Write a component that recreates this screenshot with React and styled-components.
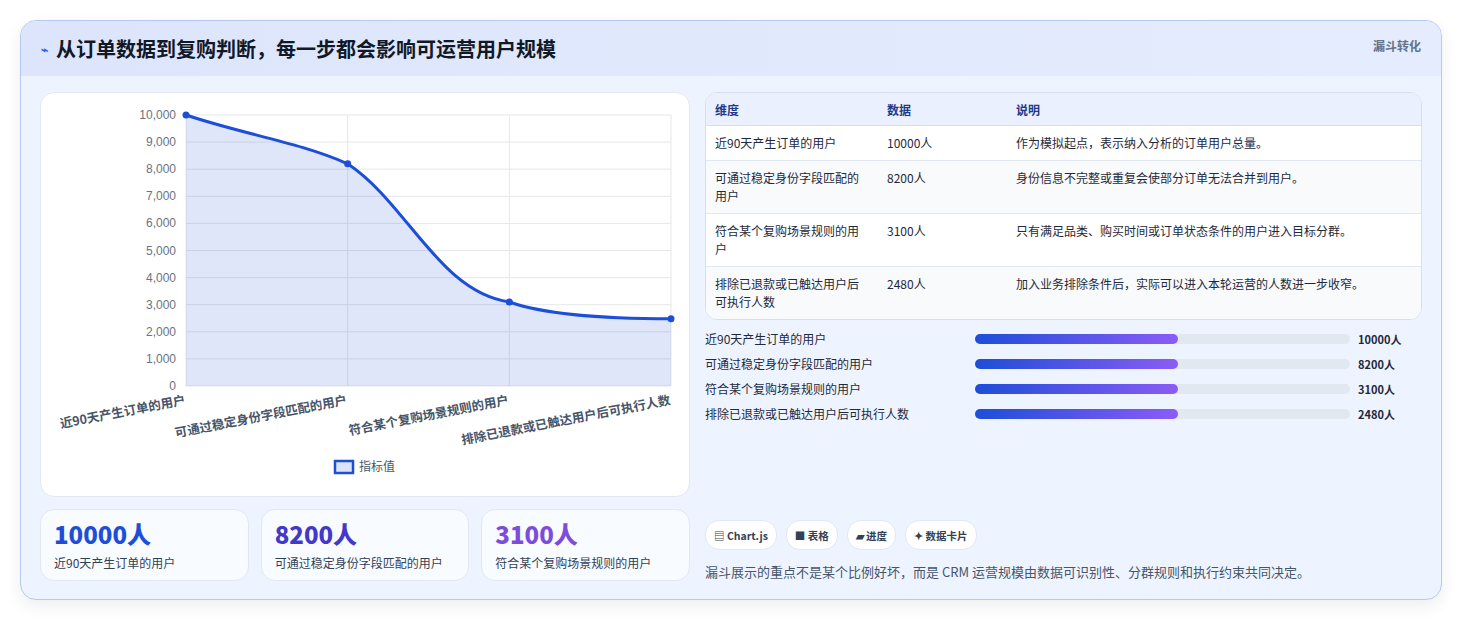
import styled, { createGlobalStyle } from "styled-components";

const GlobalStyle = createGlobalStyle`
  body { margin: 0; background: #fff; font-family: "Noto Sans CJK SC", "Noto Sans", sans-serif; color: #1e293b; }
`;

const Page = styled.div`
  padding: 20px 20px 21px 20px;
`;

const Card = styled.section`
  border: 1px solid #b9c8ee;
  border-radius: 16px;
  background: #eef4ff;
  overflow: hidden;
  box-shadow: 0 6px 16px rgba(30, 41, 59, 0.08);
`;

const Header = styled.header`
  height: 55px;
  display: flex;
  align-items: center;
  justify-content: space-between;
  padding: 0 20px;
  background: linear-gradient(90deg, #dde5fc, #e4ecfd);
`;

const Title = styled.h2`
  margin: 0;
  font-size: 20px;
  font-weight: 700;
  color: #111827;
  display: flex;
  align-items: center;
  gap: 8px;
`;

const Tag = styled.span`
  font-size: 12px;
  font-weight: 700;
  color: #64748b;
  align-self: flex-start;
  margin-top: 16px;
`;

const Body = styled.div`
  display: grid;
  grid-template-columns: 650px 1fr;
  gap: 15px;
  padding: 16px 19px 18px 19px;
`;

const LeftCol = styled.div`
  display: flex;
  flex-direction: column;
  gap: 12px;
`;

const ChartCard = styled.div`
  height: 403px;
  background: #fff;
  border: 1px solid #e2e8f0;
  border-radius: 14px;
`;

const Stats = styled.div`
  display: grid;
  grid-template-columns: repeat(3, 1fr);
  gap: 12px;
`;

const Stat = styled.div`
  height: 72px;
  box-sizing: border-box;
  background: #f8fbff;
  border: 1px solid #e2e8f0;
  border-radius: 14px;
  padding: 9px 13px;
`;

const StatNum = styled.div`
  font-size: 24px;
  font-weight: 800;
  line-height: 30px;
  color: ${(p) => p.$c};
`;

const StatLabel = styled.div`
  font-size: 12px;
  color: #334155;
  margin-top: 5px;
`;

const RightCol = styled.div`
  display: flex;
  flex-direction: column;
`;

const Table = styled.table`
  width: 100%;
  border-collapse: separate;
  border-spacing: 0;
  border: 1px solid #d6def0;
  border-radius: 12px;
  overflow: hidden;
  font-size: 12px;
  background: #fff;
  th {
    text-align: left;
    font-weight: 700;
    color: #1e3a8a;
    background: #eaf0fd;
    height: 32px;
    padding: 0 9px;
    border-bottom: 1px solid #d6def0;
  }
  td {
    padding: 8px 9px;
    line-height: 18px;
    vertical-align: top;
    color: #1e293b;
    border-bottom: 1px solid #e2e8f0;
  }
  tr:nth-child(even) td { background: #f8fafc; }
  tr:last-child td { border-bottom: none; }
`;

const Bars = styled.div`
  display: flex;
  flex-direction: column;
  gap: 8px;
  margin-top: 10px;
`;

const BarRow = styled.div`
  display: grid;
  grid-template-columns: 262px 375px 1fr;
  align-items: center;
  gap: 8px;
  font-size: 12px;
  height: 17px;
`;

const Track = styled.div`
  height: 10px;
  border-radius: 5px;
  background: #e2e8f0;
`;

const Fill = styled.div`
  height: 100%;
  border-radius: 5px;
  background: linear-gradient(90deg, #1d4ed8, #8b5cf6);
`;

const Val = styled.span`
  font-weight: 700;
  font-size: 11px;
`;

const Chips = styled.div`
  display: flex;
  gap: 9px;
  margin-top: auto;
`;

const Chip = styled.span`
  height: 28px;
  padding: 0 8px;
  border-radius: 14px;
  background: #fff;
  border: 1px solid #e2e8f0;
  font-size: 10.5px;
  font-weight: 600;
  color: #334155;
  display: flex;
  align-items: center;
  gap: 3px;
`;

const Note = styled.p`
  margin: 12px 0 0;
  font-size: 13px;
  color: #475569;
`;

const labels = ["近90天产生订单的用户", "可通过稳定身份字段匹配的用户", "符合某个复购场景规则的用户", "排除已退款或已触达用户后可执行人数"];
const values = [10000, 8200, 3100, 2480];

function Chart() {
  const x0 = 145, x1 = 630, y0 = 22, y1 = 293;
  const xs = values.map((_, i) => x0 + ((x1 - x0) / 3) * i);
  const ys = values.map((v) => y1 - (v / 10000) * (y1 - y0));
  const path = `M${xs[0]},${ys[0]} C${xs[0] + 60},${ys[0] + 20} ${xs[1] - 50},${ys[1] - 22} ${xs[1]},${ys[1]} C${xs[1] + 60},${ys[1] + 40} ${xs[2] - 70},${ys[2] - 10} ${xs[2]},${ys[2]} C${xs[2] + 40},${ys[2] + 14} ${xs[3] - 60},${ys[3]} ${xs[3]},${ys[3]}`;
  return (
    <svg width="650" height="403">
      {Array.from({ length: 11 }).map((_, i) => {
        const y = y1 - i * 27.1;
        return (
          <g key={i}>
            <line x1={x0} x2={x1} y1={y} y2={y} stroke="#e5e7eb" />
            <text x={x0 - 10} y={y + 4} textAnchor="end" fontSize="12" fill="#6b7280" fontFamily="Liberation Sans, sans-serif">{(i * 1000).toLocaleString("en-US")}</text>
          </g>
        );
      })}
      {xs.map((x) => <line key={x} x1={x} x2={x} y1={y0} y2={y1} stroke="#e5e7eb" />)}
      <path d={`${path} L${x1},${y1} L${x0},${y1} Z`} fill="rgba(29,78,216,0.14)" />
      <path d={path} fill="none" stroke="#1d4ed8" strokeWidth="3" />
      {xs.map((x, i) => <circle key={x} cx={x} cy={ys[i]} r="3.5" fill="#1d4ed8" />)}
      {labels.map((l, i) => (
        <text key={l} x={xs[i]} y={y1 + 18} textAnchor="end" fontSize="12.5" fill="#475569" fontWeight="600" transform={`rotate(-11 ${xs[i]} ${y1 + 18})`}>{l}</text>
      ))}
      <rect x="294" y="368" width="18" height="12" fill="#dbe3f8" stroke="#1d4ed8" strokeWidth="2.5" />
      <text x="318" y="378" fontSize="12" fill="#475569">指标值</text>
    </svg>
  );
}

const rows = [
  ["近90天产生订单的用户", "10000人", "作为模拟起点，表示纳入分析的订单用户总量。"],
  ["可通过稳定身份字段匹配的用户", "8200人", "身份信息不完整或重复会使部分订单无法合并到用户。"],
  ["符合某个复购场景规则的用户", "3100人", "只有满足品类、购买时间或订单状态条件的用户进入目标分群。"],
  ["排除已退款或已触达用户后可执行人数", "2480人", "加入业务排除条件后，实际可以进入本轮运营的人数进一步收窄。"],
];

export default function App() {
  return (
    <Page>
      <GlobalStyle />
      <Card>
        <Header>
          <Title><span style={{ color: "#2563eb", fontSize: 12 }}>⌁</span>从订单数据到复购判断，每一步都会影响可运营用户规模</Title>
          <Tag>漏斗转化</Tag>
        </Header>
        <Body>
          <LeftCol>
            <ChartCard><Chart /></ChartCard>
            <Stats>
              <Stat><StatNum $c="#1d4ed8">10000人</StatNum><StatLabel>近90天产生订单的用户</StatLabel></Stat>
              <Stat><StatNum $c="#4338ca">8200人</StatNum><StatLabel>可通过稳定身份字段匹配的用户</StatLabel></Stat>
              <Stat><StatNum $c="#7c4ddb">3100人</StatNum><StatLabel>符合某个复购场景规则的用户</StatLabel></Stat>
            </Stats>
          </LeftCol>
          <RightCol>
            <Table>
              <colgroup><col style={{ width: 172 }} /><col style={{ width: 129 }} /><col /></colgroup>
              <thead><tr><th>维度</th><th>数据</th><th>说明</th></tr></thead>
              <tbody>
                {rows.map((r) => <tr key={r[0]}>{r.map((c) => <td key={c}>{c}</td>)}</tr>)}
              </tbody>
            </Table>
            <Bars>
              {labels.map((l, i) => (
                <BarRow key={l}>
                  <span>{l}</span>
                  <Track><Fill style={{ width: "54%" }} /></Track>
                  <Val>{values[i]}人</Val>
                </BarRow>
              ))}
            </Bars>
            <Chips>
              <Chip>▤ Chart.js</Chip>
              <Chip>■ 表格</Chip>
              <Chip>▰ 进度</Chip>
              <Chip>✦ 数据卡片</Chip>
            </Chips>
            <Note>漏斗展示的重点不是某个比例好坏，而是 CRM 运营规模由数据可识别性、分群规则和执行约束共同决定。</Note>
          </RightCol>
        </Body>
      </Card>
    </Page>
  );
}
